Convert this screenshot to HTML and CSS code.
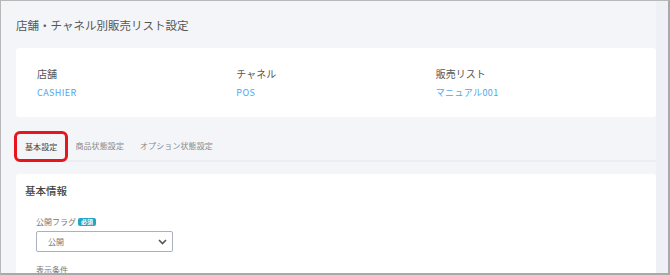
FILE: index.html
```html
<!DOCTYPE html>
<html>
<head>
  <title>店舗・チャネル別販売リスト設定</title>
  <link rel="stylesheet" href="styles.css">
</head>

<body>
  <div class="frame">
    <div class="content">
      <h1 class="page-title">店舗・チャネル別販売リスト設定</h1>

      <div class="card summary">
        <div class="summary-item">
          <div class="summary-label">店舗</div>
          <div class="summary-value">CASHIER</div>
        </div>
        <div class="summary-item">
          <div class="summary-label">チャネル</div>
          <div class="summary-value">POS</div>
        </div>
        <div class="summary-item">
          <div class="summary-label">販売リスト</div>
          <div class="summary-value">マニュアル001</div>
        </div>
      </div>

      <div class="tabs">
        <a href="#" class="tab active">基本設定</a>
        <a href="#" class="tab">商品状態設定</a>
        <a href="#" class="tab">オプション状態設定</a>
      </div>

      <div class="card detail">
        <h2 class="section-title">基本情報</h2>
        <div class="form-group">
          <label class="field-label">公開フラグ <span class="badge">必須</span></label>
          <div class="select">
            <span>公開</span>
            <svg width="9" height="6" viewBox="0 0 9 6"><path d="M1 1l3.5 3.5L8 1" fill="none" stroke="#555" stroke-width="1.6"/></svg>
          </div>
        </div>
        <div class="form-group">
          <label class="field-label">表示条件</label>
        </div>
      </div>
    </div>
    <div class="track"></div>
  </div>
</body>
</html>
```

FILE: styles.css
```css
body {
  margin: 0;
  font-family: "Noto Sans CJK JP", "Noto Sans", sans-serif;
  background: #fff;
}
.frame {
  width: 670px;
  height: 275px;
  box-sizing: border-box;
  border: 1px solid #b8b8b8;
  border-right: 2px solid #a9a9a9;
  border-bottom: 2px solid #a9a9a9;
  background: #f4f5f9;
  display: flex;
  overflow: hidden;
}
.content {
  flex: 1;
  padding-left: 15px;
}
.track {
  width: 12px;
  background: #eef0f5;
}
.page-title {
  margin: 14px 0 13px;
  font-size: 11.5px;
  line-height: 20px;
  font-weight: normal;
  color: #555;
}
.card {
  background: white;
  border-radius: 3px;
}
.summary {
  height: 69px;
  box-sizing: border-box;
  padding: 17px 21px 0;
  display: grid;
  grid-template-columns: repeat(3, 1fr);
}
.summary-label {
  font-size: 10px;
  line-height: 18px;
  color: #555;
}
.summary-value {
  margin-top: 2px;
  font-size: 9px;
  line-height: 16px;
  letter-spacing: 0.4px;
  color: #4ea6ee;
}
.tabs {
  margin-top: 14px;
  display: flex;
  align-items: center;
  height: 29px;
  border-bottom: 2px solid #eceef4;
}
.tab {
  font-size: 8px;
  letter-spacing: 0.1px;
  color: #8a8a8a;
  text-decoration: none;
  padding: 0 8px;
  line-height: 25px;
}
.tab.active {
  color: #444;
  margin-left: -2px;
  margin-right: -1px;
  margin-top: 2px;
  border: 3px solid #e8161c;
  border-radius: 6px;
}
.detail {
  margin-top: 12px;
  height: 120px;
  padding: 9px 9px 0;
}
.section-title {
  margin: 0;
  font-size: 10.5px;
  line-height: 16px;
  font-weight: 500;
  color: #444;
}
.form-group {
  padding-left: 11px;
  margin-top: 17px;
}
.form-group + .form-group {
  margin-top: 12px;
}
.field-label {
  display: flex;
  align-items: center;
  gap: 2px;
  font-size: 8px;
  line-height: 12px;
  color: #777;
}
.badge {
  background: #23a6c3;
  color: white;
  font-size: 6px;
  line-height: 8px;
  padding: 0 3px;
  border-radius: 2px;
  font-weight: bold;
}
.select {
  margin-top: 3px;
  width: 137px;
  height: 21px;
  box-sizing: border-box;
  border: 1px solid #aab0bd;
  border-radius: 2px;
  padding: 0 5px 0 11px;
  display: flex;
  align-items: center;
  justify-content: space-between;
  font-size: 8px;
  color: #777;
}
```
